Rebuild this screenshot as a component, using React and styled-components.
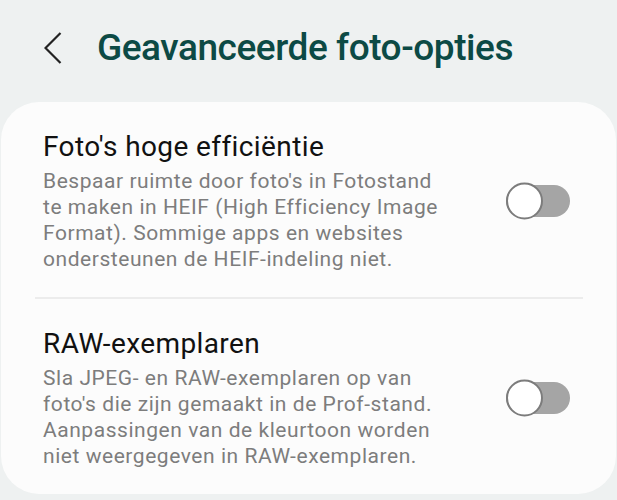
import React from 'react';
import styled, { createGlobalStyle } from 'styled-components';

const GlobalStyle = createGlobalStyle`
  html, body {
    margin: 0;
    padding: 0;
    background: #eef1f1;
    font-family: Roboto, "Noto Sans", sans-serif;
  }
`

const Page = styled.div`
  width: 617px;
  height: 500px;
  background: #eef1f1;
  overflow: hidden;
`

const Header = styled.div`
  display: flex;
  align-items: center;
  height: 96px;
  padding-left: 44px;
`

const BackButton = styled.button`
  display: flex;
  align-items: center;
  padding: 0;
  border: 0;
  background: none;
  color: #222;
  margin-right: 35px;
`

const Title = styled.h1`
  margin: 0;
  font-size: 37px;
  line-height: 48px;
  font-weight: 500;
  letter-spacing: -0.45px;
  color: #0c4a45;
`

const Card = styled.div`
  margin: 6px 1px 0;
  background: #fcfcfc;
  border-radius: 38px;
`

const Row = styled.div`
  display: flex;
  align-items: center;
  padding: 28px 46px 25px 42px;
`

const TextBlock = styled.div`
  flex: 1;
`

const RowTitle = styled.div`
  font-size: 28px;
  line-height: 34px;
  letter-spacing: 0.4px;
  color: #111;
`

const RowDesc = styled.div`
  margin-top: 4px;
  font-size: 21px;
  line-height: 26px;
  letter-spacing: 0.55px;
  color: #7d7d7d;
`

const Divider = styled.div`
  height: 2px;
  margin: 0 33px 0 34px;
  background: #ececec;
`

const Track = styled.div`
  position: relative;
  width: 64px;
  height: 32px;
  border-radius: 16px;
  background: ${p => (p.on ? '#3e91ff' : '#a5a5a5')};
  flex-shrink: 0;
`

const Knob = styled.div`
  position: absolute;
  top: 50%;
  left: ${p => (p.on ? '27px' : '0')};
  width: 33px;
  height: 33px;
  transform: translateY(-50%);
  border-radius: 50%;
  background: #fff;
  border: 2px solid #7c7c7c;
`

function Toggle({ on }) {
  return (
    <Track on={on}>
      <Knob on={on} />
    </Track>
  )
}

function SettingRow({ title, lines }) {
  return (
    <Row>
      <TextBlock>
        <RowTitle>{title}</RowTitle>
        <RowDesc>
          {lines.map((l, i) => (
            <div key={i}>{l}</div>
          ))}
        </RowDesc>
      </TextBlock>
      <Toggle on={false} />
    </Row>
  )
}

export default function App() {
  return (
    <Page>
      <GlobalStyle />
      <Header>
        <BackButton>
          <svg width="18" height="32" viewBox="0 0 18 32" fill="none">
            <path d="M16.5 1 L1.5 16 L16.5 31" stroke="currentColor" strokeWidth="2.2" />
          </svg>
        </BackButton>
        <Title>Geavanceerde foto-opties</Title>
      </Header>
      <Card>
        <SettingRow
          title="Foto's hoge efficiëntie"
          lines={[
            "Bespaar ruimte door foto's in Fotostand",
            'te maken in HEIF (High Efficiency Image',
            'Format). Sommige apps en websites',
            'ondersteunen de HEIF-indeling niet.',
          ]}
        />
        <Divider />
        <SettingRow
          title="RAW-exemplaren"
          lines={[
            'Sla JPEG- en RAW-exemplaren op van',
            "foto's die zijn gemaakt in de Prof-stand.",
            'Aanpassingen van de kleurtoon worden',
            'niet weergegeven in RAW-exemplaren.',
          ]}
        />
      </Card>
    </Page>
  )
}
